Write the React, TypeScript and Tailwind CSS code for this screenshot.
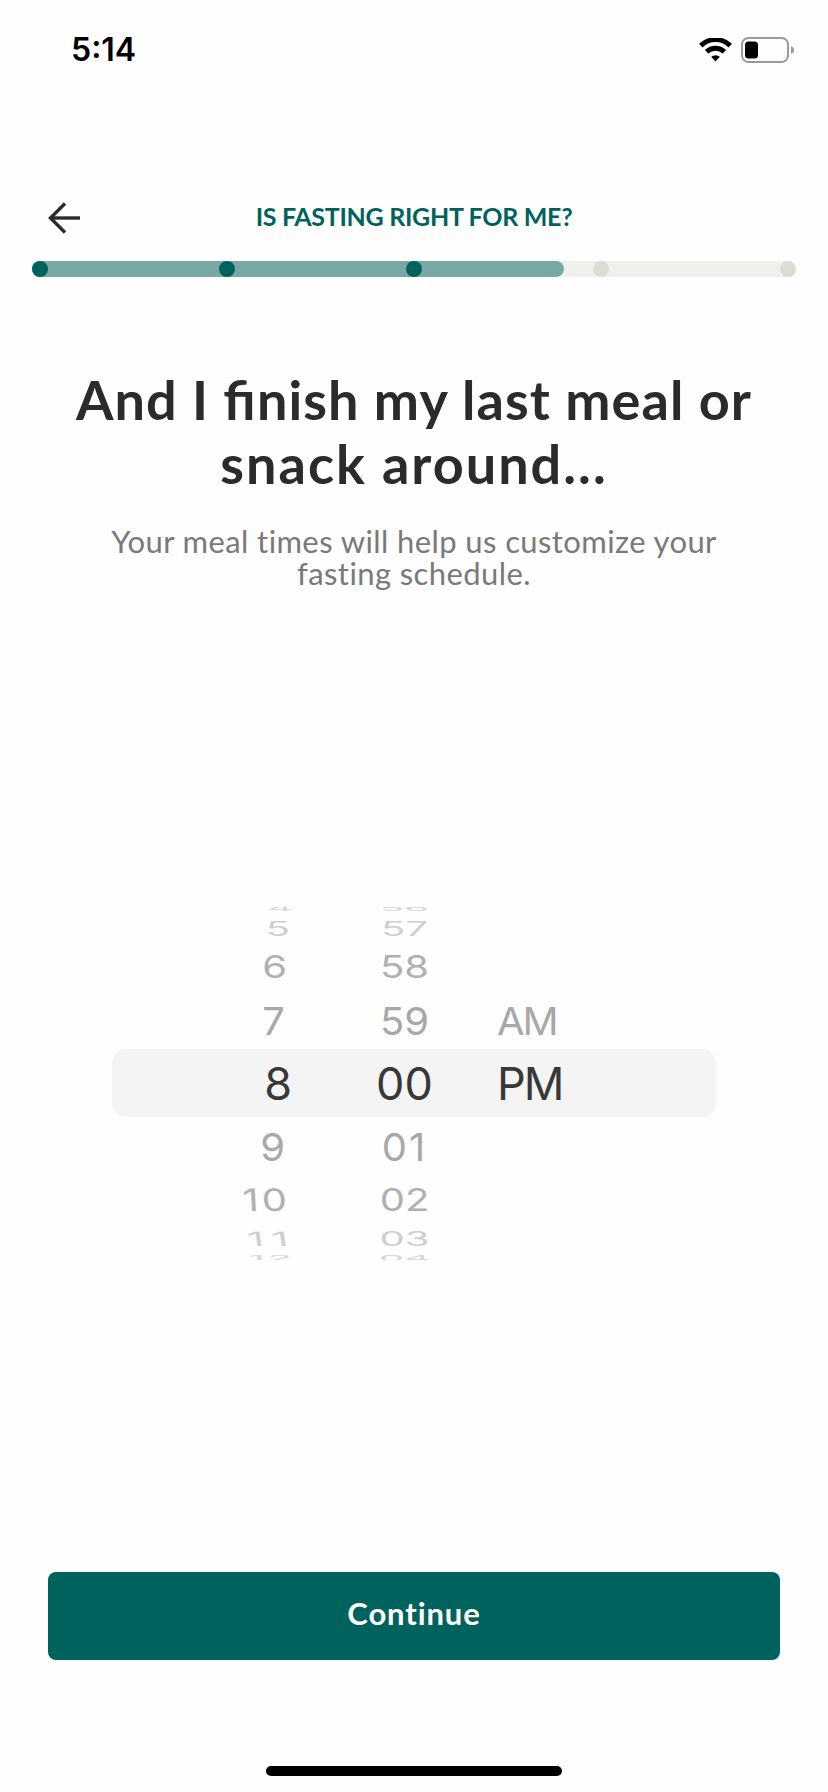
const rows = [
  { hour: '4', minute: '56', period: '', height: 'h-[7px]', text: 'text-[40px] text-[#d6d6d6] scale-y-[0.2] -translate-y-[2.5px]', shift: 'pr-[16px]' },
  { hour: '5', minute: '57', period: '', height: 'h-[29px]', text: 'text-[40px] text-[#cecece] scale-y-[0.49]', shift: 'pr-[19px]' },
  { hour: '6', minute: '58', period: '', height: 'h-[48px]', text: 'text-[40px] text-[#b0b0b0] scale-y-[0.77]', shift: 'pr-[22px]' },
  { hour: '7', minute: '59', period: 'AM', height: 'h-[59px]', text: 'text-[40px] text-[#a8a8a8] scale-y-[0.97]', shift: 'pr-[24px]' },
  { hour: '8', minute: '00', period: 'PM', height: 'h-[67px]', text: 'text-[45px] text-[#383838]', shift: 'pr-[17px]' },
  { hour: '9', minute: '01', period: '', height: 'h-[59px]', text: 'text-[40px] text-[#a8a8a8] scale-y-[0.97] tracking-[2px]', shift: 'pr-[22px]' },
  { hour: '10', minute: '02', period: '', height: 'h-[48px]', text: 'text-[40px] text-[#b0b0b0] scale-y-[0.77]', shift: 'pr-[22px] tracking-[3px] skew-x-[3deg] -mr-[3px] pl-[3px]' },
  { hour: '11', minute: '03', period: '', height: 'h-[29px]', text: 'text-[40px] text-[#cecece] scale-y-[0.49]', shift: 'pr-[13px] tracking-[8px] skew-x-[8deg]' },
  { hour: '12', minute: '04', period: '', height: 'h-[7px]', text: 'text-[40px] text-[#d6d6d6] scale-y-[0.2] translate-y-px', shift: 'pr-[14px] tracking-[3px]' },
];

const steps = [true, true, true, false, false];

function StatusBar() {
  return (
    <div className="flex h-[100px] items-center justify-between pl-[71px] pr-[33px] font-[Inter,sans-serif]">
      <span className="text-[32px] leading-none font-semibold text-black">5:14</span>
      <div className="flex items-center gap-[9px]">
        <svg width="33" height="24" viewBox="0 0 33 24" fill="none">
          <path d="M1.8 7.6a21 21 0 0 1 29.4 0" stroke="#000" strokeWidth="5" />
          <path d="M7.6 13.8a12.7 12.7 0 0 1 17.8 0" stroke="#000" strokeWidth="5" />
          <path d="M12.2 18.8a6.4 6.4 0 0 1 8.6 0L16.5 23.6z" fill="#000" />
        </svg>
        <svg width="54" height="26" viewBox="0 0 54 26" fill="none">
          <rect x="1" y="1" width="46" height="24" rx="6.5" stroke="#999" strokeWidth="2" />
          <rect x="4" y="4.5" width="13" height="17" rx="3.5" fill="#000" />
          <path d="M50 9c4 1.6 4 6.400 0 8z" fill="#999" />
        </svg>
      </div>
    </div>
  );
}

function TimePicker() {
  return (
    <div className="relative mx-[112px] mt-[318px] h-[353px] font-[Inter,sans-serif]">
      <div className="absolute inset-x-0 top-[142px] h-[68px] rounded-[14px] bg-[#f4f4f4]" />
      <div className="relative flex h-full flex-col overflow-hidden">
        {rows.map((row) => (
          <div key={row.hour} className={`${row.height} flex shrink-0 items-center`}>
            <div className="w-[197px] shrink-0">
              <div className={`${row.shift} flex justify-end`}>
                <span className={`${row.text} leading-none`}>{row.hour}</span>
              </div>
            </div>
            <div className="flex w-[188px] shrink-0 justify-center pl-[3px]">
              <span className={`${row.text} leading-none`}>{row.minute}</span>
            </div>
            <span className={`${row.text} leading-none tracking-[-2px]`}>{row.period}</span>
          </div>
        ))}
      </div>
    </div>
  );
}

export default function App() {
  return (
    <main className="flex h-[1792px] w-[828px] flex-col overflow-hidden bg-[#fefefe] font-[Lato,sans-serif]">
      <StatusBar />

      <header className="mt-[98px] flex h-[40px] items-center px-[48px]">
        <svg width="33" height="32" viewBox="0 0 33 32" fill="none" stroke="#2b2b2b" strokeWidth="3.4">
          <path d="M32 16H2.500" />
          <path d="M17 1.500 2.500 16 17 30.500" />
        </svg>
        <h2 className="flex-1 pr-[33px] pb-[4px] text-center text-[25px] leading-none font-bold tracking-[-0.3px] whitespace-nowrap text-[#00625c]">
          IS FASTING RIGHT FOR ME?
        </h2>
      </header>

      <div className="mx-[32px] mt-[23px] grid h-[16px] rounded-full bg-[#f0f0ed]">
        <div className="col-start-1 row-start-1 w-[532px] rounded-full bg-[#79a8a4]" />
        <div className="col-start-1 row-start-1 flex justify-between">
          {steps.map((done, i) => (
            <span key={i} className={`size-[16px] rounded-full ${done ? 'bg-[#00625c]' : 'bg-[#dcddd2]'}`} />
          ))}
        </div>
      </div>

      <section className="mt-[91px] text-center">
        <h1 className="text-[54px] leading-[64px] font-bold tracking-[1.1px] whitespace-nowrap text-[#2b2b2b] [font-feature-settings:'liga']">
          And I finish my last meal or
          <br />
          <span className="tracking-[2px]">snack around...</span>
        </h1>
        <p className="mt-[29px] text-[31px] leading-[32px] tracking-[0.4px] whitespace-nowrap text-[#797979]">
          Your meal times will help us customize your
          <br />
          fasting schedule.
        </p>
      </section>

      <TimePicker />

      <button className="mx-[48px] mt-[312px] h-[88px] shrink-0 rounded-[8px] bg-[#00625c] pb-[5px] text-[31px] font-bold tracking-[0.9px] text-white">
        Continue
      </button>
      <div className="mx-auto mt-auto mb-[16px] h-[10px] w-[296px] shrink-0 rounded-full bg-black" />
    </main>
  );
}
